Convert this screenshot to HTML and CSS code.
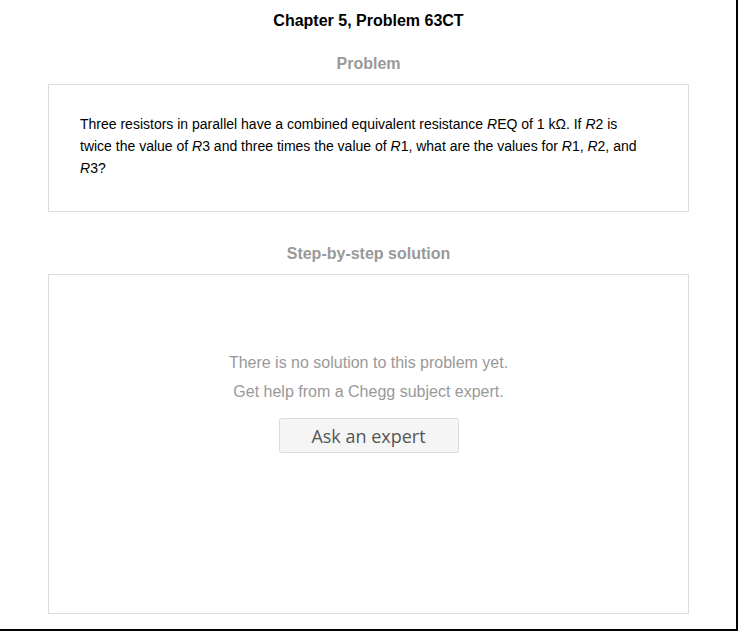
FILE: index.html
```html
<!DOCTYPE html>
<html>
<head>
<meta charset="utf-8">
<link rel="stylesheet" href="styles.css">
</head>
<body>
<div class="frame">
  <h1 class="title">Chapter 5, Problem 63CT</h1>
  <h2 class="section-head first">Problem</h2>
  <div class="card problem">
    <p>Three resistors in parallel have a combined equivalent resistance <i>R</i>EQ of 1 kΩ. If <i>R</i>2 is twice the value of <i>R</i>3 and three times the value of <i>R</i>1, what are the values for <i>R</i>1, <i>R</i>2, and <i>R</i>3?</p>
  </div>
  <h2 class="section-head">Step-by-step solution</h2>
  <div class="card solution">
    <p class="empty">There is no solution to this problem yet.</p>
    <p class="empty">Get help from a Chegg subject expert.</p>
    <button class="ask">Ask an expert</button>
  </div>
</div>
</body>
</html>
```
FILE: styles.css
```css
html, body {
  margin: 0;
  padding: 0;
  background: #fff;
}
body {
  font-family: "Liberation Sans", Arial, sans-serif;
}
.frame {
  width: 738px;
  height: 631px;
  box-sizing: border-box;
  border-right: 2px solid #000;
  border-bottom: 2px solid #000;
  padding: 11px 47px 0 48px;
  overflow: hidden;
}
.title {
  margin: 0;
  font-size: 16px;
  line-height: 20px;
  font-weight: bold;
  color: #000;
  text-align: center;
}
.section-head {
  margin: 32px 0 10px;
  font-size: 16px;
  line-height: 20px;
  font-weight: bold;
  color: #999;
  text-align: center;
}
.section-head.first {
  margin: 23px 0 10px;
}
.card {
  border: 1px solid #ddd;
  background: #fff;
}
.problem {
  padding: 28px 40px 32px 31px;
}
.problem p {
  margin: 0;
  font-size: 14px;
  line-height: 22px;
  color: #000;
}
.solution {
  height: 340px;
  box-sizing: border-box;
  padding-top: 73px;
  display: flex;
  flex-direction: column;
  align-items: center;
}
.empty {
  margin: 0;
  font-size: 16px;
  line-height: 29px;
  color: #999;
}
.ask {
  margin-top: 12px;
  width: 180px;
  height: 35px;
  box-sizing: border-box;
  border: 1px solid #ddd;
  border-radius: 2px;
  background: #f5f5f5;
  font-family: "Open Sans", sans-serif;
  font-size: 18px;
  color: #555;
  padding: 0;
}
```
